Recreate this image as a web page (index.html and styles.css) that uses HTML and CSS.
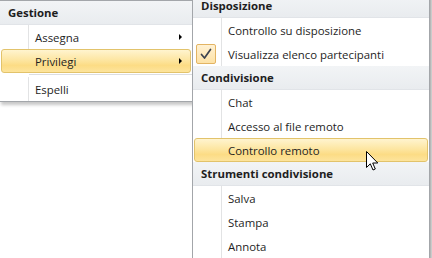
FILE: index.html
```html
<!DOCTYPE html>
<html lang="it">
<head>
    <meta charset="UTF-8">
    <title>Menu Privilegi</title>
    <link rel="stylesheet" href="styles.css">
</head>
<body>
    <div class="screen">
        <div class="menu menu-main">
            <div class="menu-header">Gestione</div>
            <div class="menu-item"><span class="icon"></span>Assegna<span class="sub-arrow"></span></div>
            <div class="menu-item active"><span class="icon"></span>Privilegi<span class="sub-arrow"></span></div>
            <div class="menu-sep"></div>
            <div class="menu-item"><span class="icon"></span>Espelli</div>
        </div>

        <div class="menu menu-sub">
            <div class="menu-header">Disposizione</div>
            <div class="menu-item"><span class="icon"></span>Controllo su disposizione</div>
            <div class="menu-item">
                <span class="icon checked">
                    <svg width="20" height="20" viewBox="0 0 20 20"><path d="M5.5 10.5 L8.5 14 L14.5 5.5" fill="none" stroke="#3c4350" stroke-width="1.7" stroke-linecap="round" stroke-linejoin="round"/></svg>
                </span>Visualizza elenco partecipanti
            </div>
            <div class="menu-header">Condivisione</div>
            <div class="menu-item"><span class="icon"></span>Chat</div>
            <div class="menu-item"><span class="icon"></span>Accesso al file remoto</div>
            <div class="menu-item active"><span class="icon"></span>Controllo remoto</div>
            <div class="menu-header">Strumenti condivisione</div>
            <div class="menu-item"><span class="icon"></span>Salva</div>
            <div class="menu-item"><span class="icon"></span>Stampa</div>
            <div class="menu-item"><span class="icon"></span>Annota</div>
        </div>

        <!-- mouse pointer over "Controllo remoto" -->
        <svg class="cursor" width="13" height="20" viewBox="0 0 13 20">
            <path d="M0.5 0.5 L0.5 16.5 L4.3 12.8 L7 19 L9.3 18 L6.7 12 L11.8 12 Z" fill="#fff" stroke="#000" stroke-width="1" stroke-linejoin="miter"/>
        </svg>
    </div>
</body>
</html>
```

FILE: styles.css
```css
/* Office style popup menus */
* { box-sizing: border-box; margin: 0; padding: 0; }
body { background: #fff; font-family: "Open Sans", "Noto Sans", sans-serif; font-size: 11.4px; color: #1e1e1e; overflow: hidden; }
.screen { position: relative; display: flex; align-items: flex-start; width: 432px; height: 258px; overflow: hidden; }

.menu { background: #fff; border: 1px solid #a3a6aa; }
.menu-main { width: 194px; margin-left: -1px; box-shadow: 2px 3px 3px rgba(0, 0, 0, 0.22); }
.menu-sub { position: relative; z-index: 1; width: 238px; margin-left: -1px; margin-top: -7px; box-shadow: 2px 2px 2px rgba(0, 0, 0, 0.3); }

.menu-header { height: 24px; display: flex; align-items: center; padding-left: 8px; font-weight: bold; background: linear-gradient(#f2f4f6, #e9ecef); border-bottom: 1px solid #e1e4e8; }

.menu-item { height: 24px; display: flex; align-items: center; margin: 0 1px; border: 1px solid transparent; border-radius: 3px;
    background: linear-gradient(to right, transparent 26px, #e2e3e4 26px, #e2e3e4 27px, #fff 27px, #fff 28px, transparent 28px); }
.menu-item.active { border-color: #e2c36b; background: linear-gradient(#fff4cf, #fde6a2 45%, #fcdc85 70%, #fde49c); }

.icon { flex: none; display: flex; width: 20px; height: 20px; margin-left: 1px; margin-right: 12px; }
.icon.checked { border: 1px solid #e3b463; border-radius: 2px; background: linear-gradient(#fff1d3, #fde2a6); }
.icon.checked svg { margin: -1px; }

.sub-arrow { margin-left: auto; margin-right: 8px; width: 0; height: 0; border-left: 3px solid #000; border-top: 3px solid transparent; border-bottom: 3px solid transparent; }

.menu-sep { height: 4px; margin-left: 29px; background: linear-gradient(transparent 1px, #dcdee1 1px, #dcdee1 2px, transparent 2px); }

.cursor { position: absolute; left: 366px; top: 151px; z-index: 2; }
```
